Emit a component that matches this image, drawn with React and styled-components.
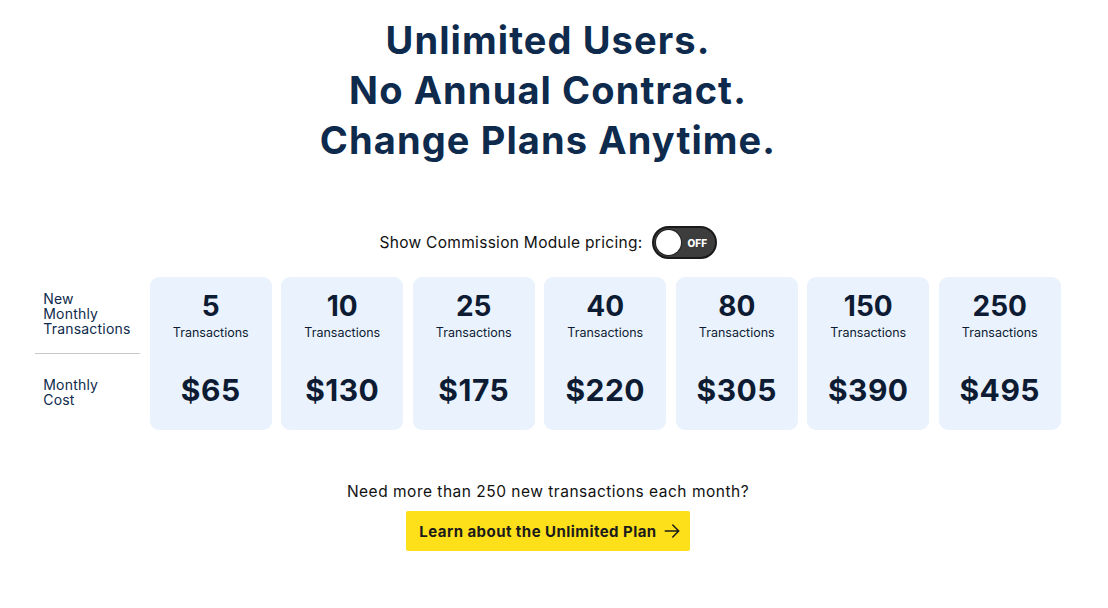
import React from "react";
import styled, { createGlobalStyle } from "styled-components";

const Global = createGlobalStyle`
  html, body { margin: 0; padding: 0; background: #fff; }
  body { font-family: "Inter", "Open Sans", sans-serif; color: #0c1f3a; }
`;

const Page = styled.div`
  width: 1096px;
  display: flex;
  flex-direction: column;
  align-items: center;
  padding-top: 15px;
`;

const Heading = styled.h1`
  margin: 0;
  text-align: center;
  font-family: "Inter", sans-serif;
  font-weight: 700;
  font-size: 38px;
  line-height: 50px;
  letter-spacing: 1.1px;
  color: #0e2a4c;
`;

const ToggleRow = styled.div`
  margin-top: 61px;
  display: flex;
  align-items: center;
  gap: 9px;
  font-size: 15.5px;
  letter-spacing: 0.3px;
  color: #111;
`;

const Switch = styled.div`
  width: 65px;
  height: 33px;
  box-sizing: border-box;
  border-radius: 17px;
  background: #3d3d3d;
  border: 2px solid #1a1a1a;
  display: flex;
  align-items: center;
  padding: 0 2px;
  gap: 7px;
`;

const Knob = styled.span`
  width: 25px;
  height: 25px;
  border-radius: 50%;
  background: #fff;
  box-shadow: 0 0 0 1px #222;
`;

const SwitchLabel = styled.span`
  color: #fff;
  font-size: 10px;
  font-weight: 800;
  letter-spacing: 0;
`;

const Table = styled.div`
  margin-top: 18px;
  display: grid;
  grid-template-columns: 105px repeat(7, 122px);
  column-gap: 9.5px;
`;

const Labels = styled.div`
  display: flex;
  flex-direction: column;
`;

const LabelBlock = styled.div`
  padding: ${p => p.$top}px 0 0 8px;
  height: 76px;
  box-sizing: border-box;
  font-size: 14px;
  line-height: 15px;
  letter-spacing: 0.2px;
  color: #0e2a4c;
`;

const Divider = styled.div`
  height: 1px;
  background: #c8c8c8;
`;

const Card = styled.div`
  height: 153px;
  background: #eaf2fd;
  border-radius: 9px;
  display: flex;
  flex-direction: column;
  align-items: center;
  padding-top: 13px;
  box-sizing: border-box;
`;

const Count = styled.div`
  font-size: 28px;
  font-weight: 700;
  line-height: 32px;
  color: #0d1b33;
`;

const Unit = styled.div`
  margin-top: 3px;
  font-size: 12.5px;
  line-height: 16px;
  color: #0d1b33;
`;

const Price = styled.div`
  margin-top: 31px;
  font-size: 30px;
  font-weight: 700;
  line-height: 36px;
  color: #0d1b33;
  letter-spacing: 0.5px;
`;

const More = styled.p`
  margin: 52px 0 0;
  font-size: 15.5px;
  letter-spacing: 0.5px;
  color: #111;
`;

const Button = styled.button`
  margin-top: 10px;
  width: 284px;
  height: 40px;
  border: none;
  border-radius: 2px;
  background: #fde01a;
  font-family: "Inter", sans-serif;
  font-size: 15px;
  font-weight: 700;
  letter-spacing: 0.45px;
  color: #1b1b1b;
  display: flex;
  align-items: center;
  justify-content: center;
  gap: 6px;
  padding: 0 0 0 4px;
  cursor: pointer;
`;

const plans = [
  ["5", "$65"], ["10", "$130"], ["25", "$175"], ["40", "$220"],
  ["80", "$305"], ["150", "$390"], ["250", "$495"],
];

export default function App() {
  return (
    <>
      <Global />
      <Page>
        <Heading>
          Unlimited Users.<br />
          No Annual Contract.<br />
          Change Plans Anytime.
        </Heading>
        <ToggleRow>
          Show Commission Module pricing:
          <Switch>
            <Knob />
            <SwitchLabel>OFF</SwitchLabel>
          </Switch>
        </ToggleRow>
        <Table>
          <Labels>
            <LabelBlock $top={14}>New<br />Monthly<br />Transactions</LabelBlock>
            <Divider />
            <LabelBlock $top={23}>Monthly<br />Cost</LabelBlock>
          </Labels>
          {plans.map(([n, p]) => (
            <Card key={n}>
              <Count>{n}</Count>
              <Unit>Transactions</Unit>
              <Price>{p}</Price>
            </Card>
          ))}
        </Table>
        <More>Need more than 250 new transactions each month?</More>
        <Button>
          Learn about the Unlimited Plan
          <svg width="18" height="18" viewBox="0 0 24 24" fill="none" stroke="#1b1b1b" strokeWidth="2" strokeLinecap="round" strokeLinejoin="round">
            <path d="M3 12h18M13 4l8 8-8 8" />
          </svg>
        </Button>
      </Page>
    </>
  );
}
